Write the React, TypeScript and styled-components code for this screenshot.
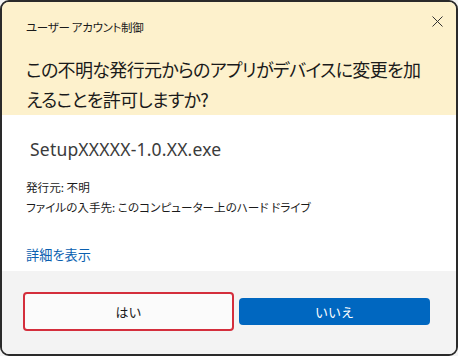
import React from 'react';
import styled, { createGlobalStyle } from 'styled-components';

const GlobalStyle = createGlobalStyle`
  html, body {
    margin: 0;
    padding: 0;
    background: #f4f4f4;
  }
  body {
    font-family: "Noto Sans CJK JP", "Noto Sans", sans-serif;
    font-feature-settings: "palt";
  }
`;

const Window = styled.div`
  box-sizing: border-box;
  width: 458px;
  height: 356px;
  border: 2px solid #2a2a2a;
  border-radius: 9px;
  overflow: hidden;
  display: flex;
  flex-direction: column;
  background: #fff;
`;

const Header = styled.div`
  background: #fdf1cc;
  height: 113px;
  padding: 18px 0 0 24px;
  box-sizing: border-box;
`;

const TitleRow = styled.div`
  display: flex;
  justify-content: space-between;
  align-items: center;
  height: 14px;
`;

const Title = styled.div`
  font-size: 11.5px;
  line-height: 14px;
  color: #1a1a1a;
  letter-spacing: -0.3px;
`;

const CloseButton = styled.button`
  border: none;
  background: none;
  padding: 0;
  margin: -11px 13px 0 0;
  width: 12px;
  height: 12px;
  display: flex;
  align-items: center;
  justify-content: center;
`;

const Question = styled.div`
  margin-top: 20px;
  font-size: 18px;
  line-height: 30px;
  color: #1a1a1a;
  letter-spacing: -0.65px;
`;

const Body = styled.div`
  flex: 1;
  padding: 22px 24px 0;
`;

const AppName = styled.div`
  font-family: "Noto Sans", "Open Sans", sans-serif;
  font-size: 17.5px;
  line-height: 24px;
  color: #3b3b3b;
  padding-left: 4px;
  letter-spacing: 0.2px;
`;

const Info = styled.div`
  margin-top: 16px;
  font-size: 11.6px;
  line-height: 20px;
  color: #1a1a1a;
`;

const MoreLink = styled.a`
  display: block;
  margin-top: 28px;
  font-size: 13.2px;
  line-height: 20px;
  color: #0a5fb0;
  text-decoration: none;
`;

const Footer = styled.div`
  background: #f3f3f3;
  height: 83px;
  box-sizing: border-box;
  padding: 21px 24px 0 21px;
  display: flex;
  align-items: flex-start;
  gap: 5px;
`;

const Button = styled.button<{ $primary?: boolean }>`
  box-sizing: border-box;
  font-family: inherit;
  font-size: 13px;
  border-radius: 4px;
  cursor: pointer;
  ${({ $primary }) =>
    $primary
      ? `
    width: 191px;
    height: 27px;
    margin-top: 6px;
    background: #0067c0;
    color: #fff;
    border: none;
  `
      : `
    width: 211px;
    height: 39px;
    background: #fbfbfb;
    color: #1a1a1a;
    border: 2px solid #d42e3c;
  `}
`;

export default function App() {
  return (
    <>
      <GlobalStyle />
      <Window>
        <Header>
          <TitleRow>
            <Title>ユーザー アカウント制御</Title>
            <CloseButton aria-label="閉じる">
              <svg width="11" height="11" viewBox="0 0 11 11">
                <path d="M0.5 0.5 L10.5 10.5 M10.5 0.5 L0.5 10.5" stroke="#333" strokeWidth="1" />
              </svg>
            </CloseButton>
          </TitleRow>
          <Question>
            この不明な発行元からのアプリがデバイスに変更を加
            <br />
            えることを許可しますか?
          </Question>
        </Header>
        <Body>
          <AppName>SetupXXXXX-1.0.XX.exe</AppName>
          <Info>
            発行元: 不明
            <br />
            ファイルの入手先: このコンピューター上のハード ドライブ
          </Info>
          <MoreLink href="#">詳細を表示</MoreLink>
        </Body>
        <Footer>
          <Button>はい</Button>
          <Button $primary>いいえ</Button>
        </Footer>
      </Window>
    </>
  );
}
